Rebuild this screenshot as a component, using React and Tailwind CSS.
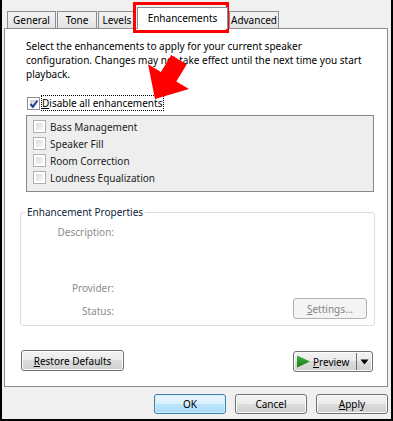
import React from 'react';

const BTN = 'flex items-center justify-center rounded-[3px] border border-[#707070] bg-[linear-gradient(#f2f2f2_0%,#ebebeb_50%,#dddddd_50%,#cfcfcf_100%)] shadow-[inset_0_0_0_1px_#fcfcfc] text-black';

function Check({ checked, disabled }) {
  return (
    <span className={`flex h-[13px] w-[13px] shrink-0 border bg-white p-[2px] ${disabled ? 'border-[#b0b0b0]' : 'border-[#8e8f8f]'}`}>
      <span className={`relative flex-1 ${disabled ? 'bg-[linear-gradient(135deg,#dcdcdc,#f7f7f7)]' : 'bg-[linear-gradient(135deg,#c9ced6,#f5f7f9)]'}`}>
        {checked && (
          <svg className="absolute -left-[1px] -top-[1px]" width="10" height="10" viewBox="0 0 10 10">
            <path d="M1.5 5 L3.8 7.8 L8.5 1.5" fill="none" stroke="#1c3f94" strokeWidth="2" />
          </svg>
        )}
      </span>
    </span>
  );
}

function Tab({ label, w, active }) {
  if (active) {
    return (
      <div className={`relative z-10 -mb-px flex h-[22px] ${w} items-start justify-center border border-b-0 border-[#898c95] bg-white pt-[3px]`}>
        {label}
      </div>
    );
  }
  return (
    <div className={`flex h-[17px] ${w} items-center justify-center border border-b-0 border-[#898c95] bg-[linear-gradient(#f3f3f3,#e3e3e3)] text-black`}>
      {label}
    </div>
  );
}

const ITEMS = ['Bass Management', 'Speaker Fill', 'Room Correction', 'Loudness Equalization'];

export default function App() {
  return (
    <div className="relative h-[421px] w-[393px] overflow-hidden border-x-2 border-b-2 border-black bg-[#f0f0f0] pl-[2px] pr-[3px] font-['Noto_Sans',sans-serif] text-[10px] leading-[14px] text-black">
      {/* tab strip */}
      <div className="flex h-[28px] items-end gap-[1px] pl-[3px]">
        <Tab label="General" w="w-[49px]" />
        <Tab label="Tone" w="w-[40px]" />
        <Tab label="Levels" w="w-[38px]" />
        <Tab label="Enhancements" w="w-[91px]" active />
        <Tab label="Advanced" w="w-[50px]" />
      </div>

      {/* tab panel */}
      <div className="flex h-[359px] w-[384px] flex-col border border-[#898c95] bg-white">
        <p className="ml-[21px] mt-[10px] whitespace-nowrap">
          Select the enhancements to apply for your current speaker<br />
          configuration. Changes may not take effect until the next time you start<br />
          playback.
        </p>

        <div className="ml-[22px] mt-[14px] flex h-[16px] items-center">
          <Check checked />
          <span className="ml-[1px] flex h-[16px] items-center border border-dotted border-black pr-[1px]">
            <span><span className="underline">D</span>isable all enhancements</span>
          </span>
        </div>

        <div className="ml-[21px] mt-[4px] h-[77px] w-[348px] border border-[#828790] bg-[#eeeeee] pl-[6px] pt-[2px]">
          {ITEMS.map(item => (
            <div key={item} className="flex h-[17px] items-center gap-[4px] text-[#222]">
              <Check disabled />
              <span>{item}</span>
            </div>
          ))}
        </div>

        <fieldset className="ml-[15px] mt-[13px] flex h-[121px] w-[355px] flex-col rounded-[3px] border border-[#d5dfe5]">
          <legend className="ml-[4px] px-[2px] text-[#0f1e3c]">Enhancement Properties</legend>
          <div className="mt-[6px] w-[93px] text-right text-[#8d8d8d]">Description:</div>
          <div className="mt-[42px] w-[93px] text-right text-[#8d8d8d]">Provider:</div>
          <div className="mt-[3px] flex items-start">
            <div className="mt-[6px] w-[93px] text-right text-[#8d8d8d]">Status:</div>
            <div className="ml-auto mr-[7px] flex h-[21px] w-[74px] items-center justify-center rounded-[3px] border border-[#adb2b5] bg-[#f4f4f4] text-[#838383]">
              <span><span className="underline">S</span>ettings...</span>
            </div>
          </div>
        </fieldset>

        <div className="ml-[16px] mr-[14px] mt-[24px] flex items-start justify-between">
          <div className={`${BTN} h-[21px] w-[103px]`}>
            <span><span className="underline">R</span>estore Defaults</span>
          </div>
          <div className={`${BTN} mt-[1px] h-[21px] w-[80px] justify-start pl-[2px]`}>
            <svg width="15" height="13" viewBox="0 0 15 13">
              <defs>
                <linearGradient id="pg" x1="0" y1="0" x2="0" y2="1">
                  <stop offset="0" stopColor="#3fb33f" />
                  <stop offset="1" stopColor="#137a13" />
                </linearGradient>
              </defs>
              <path d="M1 0.5 L14 6.5 L1 12.5 Z" fill="url(#pg)" />
            </svg>
            <span className="ml-[2px]"><span className="underline">P</span>review</span>
            <span className="ml-auto h-[17px] w-px bg-[#707070]" />
            <svg className="mx-[3px]" width="9" height="6" viewBox="0 0 9 6">
              <path d="M0.5 0.5 L8.5 0.5 L4.5 5.5 Z" fill="#000" />
            </svg>
          </div>
        </div>
      </div>

      {/* dialog buttons */}
      <div className="mt-[7px] flex justify-end gap-[9px]">
        <div className="flex h-[20px] w-[72px] items-center justify-center rounded-[3px] border border-[#3c7fb1] bg-[linear-gradient(#eaf6fd_0%,#d9f0fc_50%,#bee6fd_50%,#a7d9f5_100%)] shadow-[inset_0_0_0_1px_#d4f0fc]">OK</div>
        <div className={`${BTN} h-[20px] w-[72px]`}>Cancel</div>
        <div className={`${BTN} h-[20px] w-[72px]`}>
          <span><span className="underline">A</span>pply</span>
        </div>
      </div>

      {/* annotation overlays */}
      <div className="pointer-events-none absolute left-[131px] top-[2px] h-[31px] w-[96px] border-[3px] border-[#ff0000]" />
      <svg className="pointer-events-none absolute left-0 top-0" width="393" height="421">
        <polygon
          points="153,99 187,89 174.3,81.5 184.7,64.4 169.3,55 158.9,72.1 146.1,64.3"
          fill="#ff0000"
        />
      </svg>
    </div>
  );
}
